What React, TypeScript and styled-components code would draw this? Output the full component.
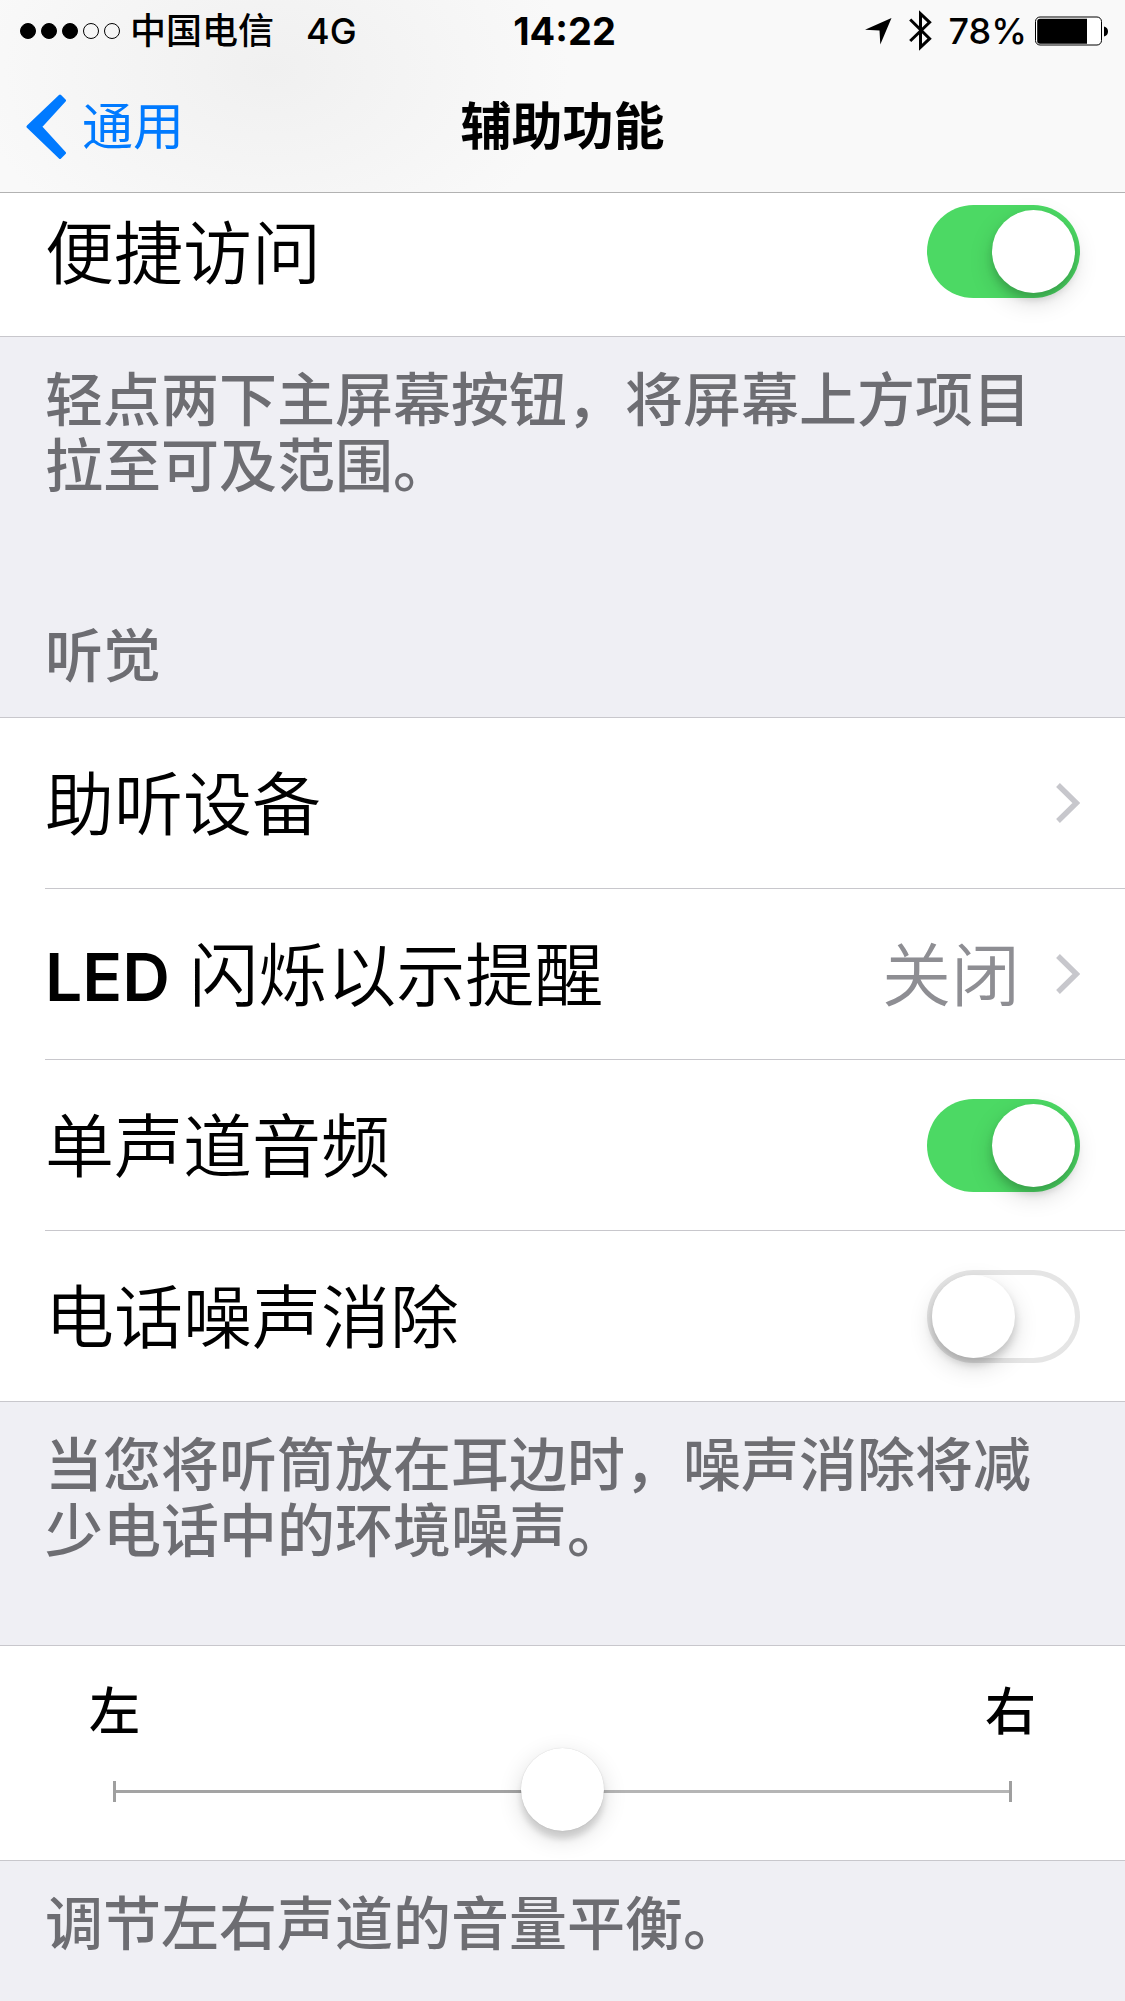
import React, { useState } from "react";
import styled, { createGlobalStyle } from "styled-components";

const GlobalStyle = createGlobalStyle`
  * { box-sizing: border-box; }
  html, body { margin: 0; padding: 0; background: #efeff4; }
  body {
    font-family: Inter, "Noto Sans CJK SC", sans-serif;
    color: #000;
  }
  button, input { font: inherit; margin: 0; }
`;

const Page = styled.div`
  min-height: 100vh;
  background: #efeff4;
`;

const Header = styled.header`
  background:
    radial-gradient(ellipse 300px 200px at 270px 70px, #f0f0f0, rgba(240, 240, 240, 0) 100%),
    #f9f9f9;
  border-bottom: 1px solid #b2b2b2;
`;

const StatusBar = styled.div`
  display: grid;
  grid-template-columns: 1fr auto 1fr;
  align-items: center;
  height: 62px;
  padding: 0 16px 0 20px;
  font-size: 36px;
  line-height: 62px;
  font-weight: 500;
`;

const StatusGroup = styled.div<{ $end?: boolean }>`
  display: flex;
  align-items: center;
  justify-content: ${(p) => (p.$end ? "flex-end" : "flex-start")};
`;

const Dots = styled.span`
  display: flex;
  gap: 5px;
  margin-right: 10px;
`;

const Dot = styled.span<{ $on: boolean }>`
  width: 16px;
  height: 16px;
  border: 1px solid #000;
  border-radius: 50%;
  background: ${(p) => (p.$on ? "#000" : "transparent")};
`;

const Network = styled.span`
  margin-left: 32px;
`;

const Clock = styled.time`
  font-size: 38px;
  font-weight: 700;
`;

const Percent = styled.span`
  margin: 0 8px 0 16px;
`;

const NavBar = styled.nav`
  display: grid;
  grid-template-columns: 1fr auto 1fr;
  align-items: center;
  height: 130px;
  padding: 0 26px;
  font-size: 51px;
  line-height: 72px;
`;

const Back = styled.a`
  display: flex;
  align-items: center;
  gap: 15px;
  color: #007aff;
  text-decoration: none;
`;

const Title = styled.h1`
  margin: 0;
  font-size: 51px;
  line-height: 72px;
  font-weight: 700;
`;

const Group = styled.section`
  background: #fff;
  border-top: 1px solid #c8c7cc;
  border-bottom: 1px solid #c8c7cc;
`;

const FirstGroup = styled(Group)`
  border-top: 0;
  padding-bottom: 26px;
`;

const rowStyle = `
  display: flex;
  align-items: center;
  gap: 36px;
  padding-right: 45px;
  margin-left: 45px;
  font-size: 69px;
  line-height: 96px;
  font-weight: 350;
  color: #000;
  text-decoration: none;
`;

const LinkRow = styled.a`
  ${rowStyle}
  height: 170px;
  & + & , & + label { height: 171px; border-top: 1px solid #c8c7cc; }
`;

const SwitchRow = styled.label<{ $compact?: boolean }>`
  ${rowStyle}
  height: ${(p) => (p.$compact ? "117px" : "170px")};
  & + & { height: 171px; border-top: 1px solid #c8c7cc; }
`;

const RowText = styled.span`
  flex: 1;
  padding-top: 4px;
  white-space: nowrap;
`;

const Strong = styled.b`
  font-size: 66px;
  font-weight: 600;
`;

const Value = styled.span`
  padding-top: 4px;
  color: #8e8e93;
`;

const Switch = styled.input.attrs({ type: "checkbox", role: "switch" })`
  appearance: none;
  flex: none;
  display: flex;
  align-items: center;
  width: 153px;
  height: 93px;
  padding: 5px;
  border-radius: 47px;
  box-shadow: inset 0 0 0 5px #e5e5e5;
  &::before {
    content: "";
    width: 83px;
    height: 83px;
    border-radius: 50%;
    background: #fff;
    box-shadow: 0 9px 24px rgba(0, 0, 0, 0.15), 0 6px 8px rgba(0, 0, 0, 0.16);
  }
  &:checked {
    justify-content: flex-end;
    background: #4cd964;
    box-shadow: none;
  }
`;

const Note = styled.p<{ $gap: number }>`
  margin: 0;
  padding: 30px 45px ${(p) => p.$gap}px;
  font-size: 58px;
  line-height: 66px;
  font-weight: 500;
  color: #6d6d72;
`;

const Heading = styled.h2`
  margin: 0;
  padding: 0 45px 28px;
  font-size: 58px;
  line-height: 66px;
  font-weight: 500;
  color: #6d6d72;
`;

const Balance = styled.div`
  padding: 30px 89px 29px;
  font-size: 51px;
  line-height: 72px;
  font-weight: 500;
`;

const Ends = styled.div`
  display: flex;
  justify-content: space-between;
`;

const Slider = styled.input.attrs({ type: "range", min: 0, max: 100 })`
  appearance: none;
  display: block;
  width: calc(100% - 48px);
  height: 83px;
  margin: 0 24px;
  background:
    linear-gradient(#9f9f9f, #9f9f9f) left 0 top 33px / 3px 21px no-repeat,
    linear-gradient(#9f9f9f, #9f9f9f) right 0 top 33px / 3px 21px no-repeat,
    linear-gradient(90deg, #a3a3a3 50%, #b5b5b5 50%) left 0 top 42px / 100% 3px no-repeat;
  &::-webkit-slider-thumb {
    appearance: none;
    width: 83px;
    height: 83px;
    border-radius: 50%;
    background: #fff;
    box-shadow: 0 0 1px rgba(0, 0, 0, 0.2), 0 7px 24px rgba(0, 0, 0, 0.14), 0 8px 6px rgba(0, 0, 0, 0.13);
  }
`;

const Chevron = () => (
  <svg width="24" height="40" viewBox="0 0 24 40" fill="none" aria-hidden="true">
    <path d="M2 2L20.3 20L2 38" stroke="#c7c7cc" strokeWidth="5.4" />
  </svg>
);

const BackArrow = () => (
  <svg width="41" height="66" viewBox="0 0 41 66" aria-hidden="true">
    <path
      d="M34 2L38.5 6.5L14.5 32.7L38.5 59L34 63.5L2 32.7Z"
      fill="#007aff"
      stroke="#007aff"
      strokeWidth="3"
      strokeLinejoin="round"
    />
  </svg>
);

const LocationIcon = () => (
  <svg width="27" height="27" viewBox="0 0 27 27" aria-hidden="true">
    <path d="M0 11.7L26.5 0L15.3 26.5L14.5 12.5Z" />
  </svg>
);

const BluetoothSvg = styled.svg`
  margin-left: 17px;
`;

const BluetoothIcon = () => (
  <BluetoothSvg width="24" height="42" viewBox="0 0 24 42" fill="none" aria-hidden="true">
    <path d="M1.2 9.5L20.6 28.7L11.5 37.3V3.7L20.6 12.3L1.2 31" stroke="#000" strokeWidth="3" />
  </BluetoothSvg>
);

const BatteryIcon = () => (
  <svg width="74" height="30" viewBox="0 0 74 30" aria-hidden="true">
    <rect x="0.5" y="1" width="66" height="28" rx="4.5" fill="#fff" stroke="#000" />
    <path d="M5 2.8H52V27.8H5Q2.2 27.8 2.2 25V5.6Q2.2 2.8 5 2.8Z" />
    <path d="M69 10.5Q73 11.5 73 15.5T69 20.5Z" />
  </svg>
);

export default function App() {
  const [reach, setReach] = useState(true);
  const [mono, setMono] = useState(true);
  const [noise, setNoise] = useState(false);
  const [balance, setBalance] = useState(50);

  return (
    <Page lang="zh-CN">
      <GlobalStyle />
      <Header>
        <StatusBar>
          <StatusGroup>
            <Dots>
              {[1, 2, 3, 4, 5].map((n) => (
                <Dot key={n} $on={n <= 3} />
              ))}
            </Dots>
            <span>中国电信</span>
            <Network>4G</Network>
          </StatusGroup>
          <Clock>14:22</Clock>
          <StatusGroup $end>
            <LocationIcon />
            <BluetoothIcon />
            <Percent>78%</Percent>
            <BatteryIcon />
          </StatusGroup>
        </StatusBar>
        <NavBar>
          <Back href="#general">
            <BackArrow />
            通用
          </Back>
          <Title>辅助功能</Title>
        </NavBar>
      </Header>
      <main>
        <FirstGroup>
          <SwitchRow $compact>
            <RowText>便捷访问</RowText>
            <Switch checked={reach} onChange={(e) => setReach(e.target.checked)} />
          </SwitchRow>
        </FirstGroup>
        <Note $gap={124}>轻点两下主屏幕按钮，将屏幕上方项目拉至可及范围。</Note>
        <Heading>听觉</Heading>
        <Group>
          <LinkRow href="#hearing-devices">
            <RowText>助听设备</RowText>
            <Chevron />
          </LinkRow>
          <LinkRow href="#led-flash">
            <RowText>
              <Strong>LED</Strong> 闪烁以示提醒
            </RowText>
            <Value>关闭</Value>
            <Chevron />
          </LinkRow>
          <SwitchRow>
            <RowText>单声道音频</RowText>
            <Switch checked={mono} onChange={(e) => setMono(e.target.checked)} />
          </SwitchRow>
          <SwitchRow>
            <RowText>电话噪声消除</RowText>
            <Switch checked={noise} onChange={(e) => setNoise(e.target.checked)} />
          </SwitchRow>
        </Group>
        <Note $gap={81}>当您将听筒放在耳边时，噪声消除将减少电话中的环境噪声。</Note>
        <Group>
          <Balance>
            <Ends>
              <label htmlFor="balance">左</label>
              <label htmlFor="balance">右</label>
            </Ends>
            <Slider id="balance" value={balance} onChange={(e) => setBalance(Number(e.target.value))} />
          </Balance>
        </Group>
        <Note $gap={29}>调节左右声道的音量平衡。</Note>
      </main>
    </Page>
  );
}
